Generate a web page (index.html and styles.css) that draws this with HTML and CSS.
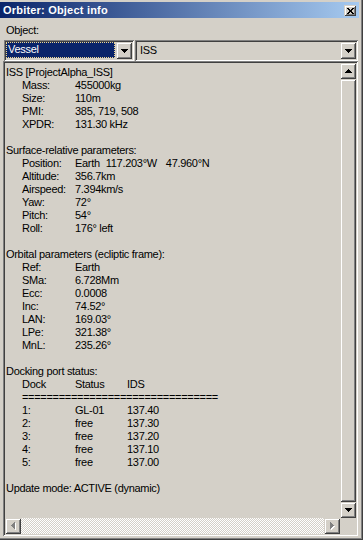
FILE: index.html
```html
<!DOCTYPE html>
<html lang="en">
<head>
  <meta charset="UTF-8">
  <title>Orbiter: Object info</title>
  <link rel="stylesheet" href="styles.css">
</head>
<body>
  <div class="window">
    <div class="titlebar">
      <span class="title">Orbiter: Object info</span>
      <div class="close btn3d">
        <svg width="7" height="6" viewBox="0 0 7 6" shape-rendering="crispEdges"><path fill="#000" d="M0 0h2v1H0zM5 0h2v1H5zM1 1h2v1H1zM4 1h2v1H4zM2 2h3v2H2zM1 4h2v1H1zM4 4h2v1H4zM0 5h2v1H0zM5 5h2v1H5z"/></svg>
      </div>
    </div>

    <div class="client">
      <div class="label">Object:</div>

      <div class="combos">
        <div class="combo combo-type">
          <div class="combo-value"><span class="selected">Vessel</span></div>
          <div class="combo-btn btn3d">
            <svg width="7" height="4" viewBox="0 0 7 4" shape-rendering="crispEdges"><path fill="#000" d="M0 0h7v1H0zM1 1h5v1H1zM2 2h3v1H2zM3 3h1v1H3z"/></svg>
          </div>
        </div>
        <div class="combo combo-name">
          <div class="combo-value"><span class="plain">ISS</span></div>
          <div class="combo-btn btn3d">
            <svg width="7" height="4" viewBox="0 0 7 4" shape-rendering="crispEdges"><path fill="#000" d="M0 0h7v1H0zM1 1h5v1H1zM2 2h3v1H2zM3 3h1v1H3z"/></svg>
          </div>
        </div>
      </div>

      <div class="infobox">
        <div class="info-main">
          <div class="info-text">
            <div class="section">
              <div class="line">ISS [ProjectAlpha_ISS]</div>
              <div class="row"><span>Mass:</span><span>455000kg</span></div>
              <div class="row"><span>Size:</span><span>110m</span></div>
              <div class="row"><span>PMI:</span><span>385, 719, 508</span></div>
              <div class="row"><span>XPDR:</span><span>131.30 kHz</span></div>
            </div>

            <div class="section">
              <div class="line">Surface-relative parameters:</div>
              <div class="row"><span>Position:</span><span>Earth<span class="lng">117.203°W</span><span class="lat">47.960°N</span></span></div>
              <div class="row"><span>Altitude:</span><span>356.7km</span></div>
              <div class="row"><span>Airspeed:</span><span>7.394km/s</span></div>
              <div class="row"><span>Yaw:</span><span>72°</span></div>
              <div class="row"><span>Pitch:</span><span>54°</span></div>
              <div class="row"><span>Roll:</span><span>176° left</span></div>
            </div>

            <div class="section">
              <div class="line">Orbital parameters (ecliptic frame):</div>
              <div class="row"><span>Ref:</span><span>Earth</span></div>
              <div class="row"><span>SMa:</span><span>6.728Mm</span></div>
              <div class="row"><span>Ecc:</span><span>0.0008</span></div>
              <div class="row"><span>Inc:</span><span>74.52°</span></div>
              <div class="row"><span>LAN:</span><span>169.03°</span></div>
              <div class="row"><span>LPe:</span><span>321.38°</span></div>
              <div class="row"><span>MnL:</span><span>235.26°</span></div>
            </div>

            <div class="section">
              <div class="line">Docking port status:</div>
              <div class="dock"><span>Dock</span><span>Status</span><span>IDS</span></div>
              <div class="rule">================================</div>
              <div class="dock"><span>1:</span><span>GL-01</span><span>137.40</span></div>
              <div class="dock"><span>2:</span><span>free</span><span>137.30</span></div>
              <div class="dock"><span>3:</span><span>free</span><span>137.20</span></div>
              <div class="dock"><span>4:</span><span>free</span><span>137.10</span></div>
              <div class="dock"><span>5:</span><span>free</span><span>137.00</span></div>
            </div>

            <div class="line">Update mode: ACTIVE (dynamic)</div>
          </div>

          <div class="vscroll">
            <div class="sb-btn btn3d">
              <svg width="7" height="4" viewBox="0 0 7 4" shape-rendering="crispEdges"><path fill="#000" d="M3 0h1v1H3zM2 1h3v1H2zM1 2h5v1H1zM0 3h7v1H0z"/></svg>
            </div>
            <div class="thumb btn3d"></div>
            <div class="sb-btn btn3d">
              <svg width="7" height="4" viewBox="0 0 7 4" shape-rendering="crispEdges"><path fill="#000" d="M0 0h7v1H0zM1 1h5v1H1zM2 2h3v1H2zM3 3h1v1H3z"/></svg>
            </div>
          </div>
        </div>

        <div class="hrow">
          <div class="hscroll">
            <div class="sb-btn btn3d">
              <svg width="5" height="8" viewBox="0 0 5 8" shape-rendering="crispEdges"><path fill="#fff" d="M4 1h1v7H4zM3 2h1v5H3zM2 3h1v3H2zM1 4h1v1H1z"/><path fill="#808080" d="M3 0h1v7H3zM2 1h1v5H2zM1 2h1v3H1zM0 3h1v1H0z"/></svg>
            </div>
            <div class="track"></div>
            <div class="sb-btn btn3d">
              <svg width="5" height="8" viewBox="0 0 5 8" shape-rendering="crispEdges"><path fill="#fff" d="M1 1h1v7H1zM2 2h1v5H2zM3 3h1v3H3zM4 4h1v1H4z"/><path fill="#808080" d="M0 0h1v7H0zM1 1h1v5H1zM2 2h1v3H2zM3 3h1v1H3z"/></svg>
            </div>
          </div>
          <div class="corner"></div>
        </div>
      </div>
    </div>
  </div>
</body>
</html>
```

FILE: styles.css
```css
* {
  box-sizing: border-box;
}

body {
  margin: 0;
  background: #d4d0c8;
  font-family: "Liberation Sans", Arial, sans-serif;
  font-size: 11px;
  letter-spacing: -0.3px;
  color: #000;
}

.window {
  width: 363px;
  height: 540px;
  padding: 2px 4px 4px 0;
  display: flex;
  flex-direction: column;
  box-shadow: inset -1px -1px #404040, inset -2px -2px #808080;
}

/* classic raised 3d look */
.btn3d {
  background: #d4d0c8;
  box-shadow: inset 1px 1px #d4d0c8, inset -1px -1px #404040,
              inset 2px 2px #fff, inset -2px -2px #808080;
  display: flex;
  align-items: center;
  justify-content: center;
}

.titlebar {
  height: 16px;
  padding: 0 3px 0 3px;
  display: flex;
  align-items: center;
  justify-content: space-between;
  background: linear-gradient(to right, #0a246a, #a6caf0);
}

.title {
  color: #fff;
  font-weight: bold;
  font-size: 11px;
  letter-spacing: 0.2px;
}

.close {
  width: 12px;
  height: 11px;
  padding-top: 1px;
}

.close svg {
  display: block;
}

.client {
  flex: 1;
  display: flex;
  flex-direction: column;
  padding: 0 1px 0 3px;
}

.label {
  margin-top: 6px;
  padding-left: 3px;
  line-height: 13px;
}

.combos {
  margin-top: 3px;
  margin-left: 1px;
  display: flex;
  gap: 1px;
}

.combo {
  height: 21px;
  padding: 2px;
  display: flex;
  box-shadow: inset 1px 1px #808080, inset -1px -1px #fff,
              inset 2px 2px #404040, inset -2px -2px #d4d0c8;
}

.combo-type {
  width: 130px;
}

.combo-name {
  flex: 1;
}

.combo-value {
  flex: 1;
  display: flex;
  padding: 0 1px 1px 0;
}

.selected {
  flex: 1;
  background: #0a246a;
  color: #fff;
  border: 1px dotted #f0d890;
  padding-left: 1px;
  line-height: 13px;
}

.plain {
  padding: 2px 0 0 3px;
  line-height: 13px;
}

.combo-btn {
  width: 16px;
}

.infobox {
  flex: 1;
  display: flex;
  flex-direction: column;
  padding: 2px;
  box-shadow: inset 1px 1px #808080, inset -1px -1px #fff,
              inset 2px 2px #404040, inset -2px -2px #d4d0c8;
}

.info-main {
  flex: 1;
  display: flex;
  min-height: 0;
}

.info-text {
  flex: 1;
  padding: 3px 0 0 1px;
  line-height: 13px;
  white-space: nowrap;
  overflow: hidden;
}

.section {
  margin-bottom: 13px;
}

.row {
  display: grid;
  grid-template-columns: 53px auto;
  padding-left: 16px;
}

.lng {
  margin-left: 6px;
}

.lat {
  margin-left: 9px;
}

.dock {
  display: grid;
  grid-template-columns: 53px 52px auto;
  padding-left: 16px;
}

.rule {
  padding-left: 16px;
}

.vscroll {
  width: 16px;
  display: flex;
  flex-direction: column;
}

.sb-btn {
  width: 16px;
  height: 16px;
  flex: none;
}

.sb-btn svg {
  display: block;
}

.thumb {
  flex: 1;
}

.hrow {
  height: 16px;
  display: flex;
}

.hscroll {
  flex: 1;
  display: flex;
}

.track {
  flex: 1;
  background: repeating-conic-gradient(#fff 0% 25%, #d4d0c8 0% 50%) 0 0 / 2px 2px;
}

.corner {
  width: 16px;
  background: #d4d0c8;
}
```
